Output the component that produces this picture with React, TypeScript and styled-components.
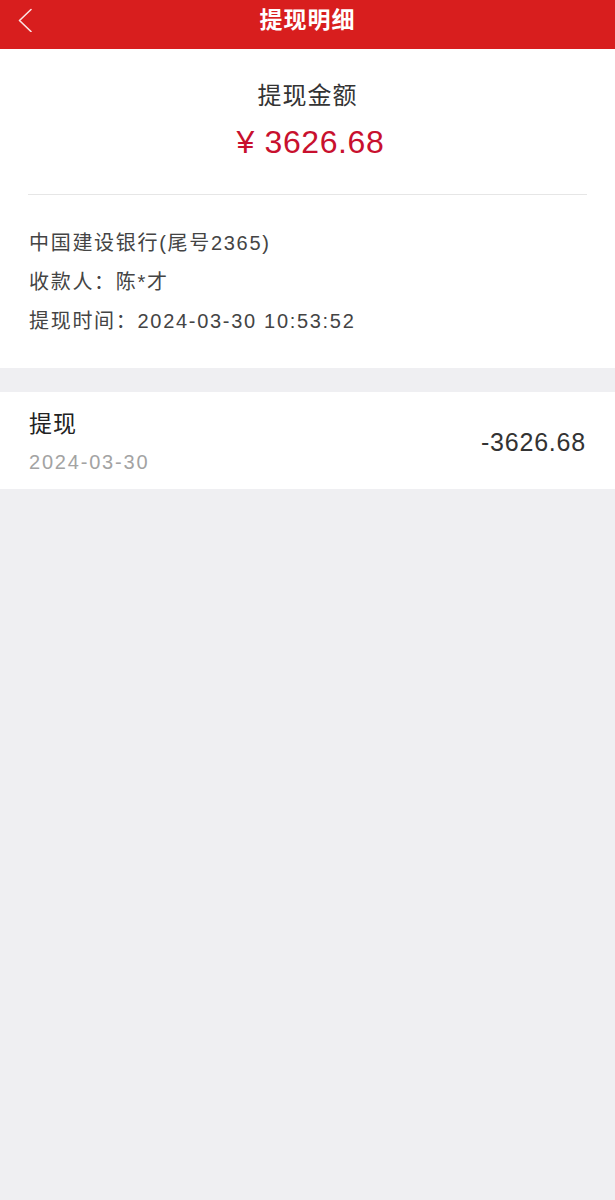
import React from 'react';
import styled, { createGlobalStyle } from 'styled-components';

const red = '#d81e1e';
const amountRed = '#c8102e';
const pageGray = '#efeff2';
const fontStack = `'Liberation Sans', 'Noto Sans CJK SC', sans-serif`;

const GlobalStyle = createGlobalStyle`
  html, body {
    margin: 0;
    padding: 0;
    background: ${pageGray};
    font-family: ${fontStack};
  }
`;

const Page = styled.div`
  width: 615px;
  min-height: 1200px;
  background: ${pageGray};
`;

const Header = styled.header`
  height: 49px;
  background: ${red};
  display: grid;
  grid-template-columns: 60px 1fr 60px;
  align-items: center;
`;

const BackButton = styled.button`
  width: 40px;
  height: 49px;
  padding: 0 0 0 17px;
  border: 0;
  background: transparent;
  display: flex;
  align-items: center;
  align-self: start;
  margin-top: -5px;
`;

const Title = styled.h1`
  margin: -9px 0 0;
  text-align: center;
  color: #fff;
  font-size: 23px;
  font-weight: 700;
  letter-spacing: 1px;
  line-height: 49px;
`;

const Card = styled.section`
  background: #fff;
`;

const Summary = styled.div`
  padding-top: 30px;
  display: flex;
  flex-direction: column;
  align-items: center;
  gap: 9px;
`;

const SummaryLabel = styled.div`
  font-size: 24px;
  line-height: 34px;
  color: #333;
  letter-spacing: 1px;
`;

const SummaryAmount = styled.div`
  font-size: 32px;
  line-height: 40px;
  color: ${amountRed};
  letter-spacing: 0.6px;
  margin-left: 6px;
`;

const Divider = styled.hr`
  margin: 32px 28px 0;
  border: 0;
  border-top: 1px solid #e6e6e6;
`;

const InfoList = styled.div`
  padding: 29px 29px 27px;
  display: flex;
  flex-direction: column;
`;

const InfoLine = styled.div`
  font-size: 20px;
  line-height: 39px;
  color: #444;
  letter-spacing: 1.7px;
`;

const Gap = styled.div`
  height: 24px;
`;

const Record = styled.div`
  background: #fff;
  padding: 16px 29px 13px;
  display: flex;
  align-items: center;
  justify-content: space-between;
`;

const RecordMain = styled.div`
  display: flex;
  flex-direction: column;
  gap: 8px;
`;

const RecordTitle = styled.div`
  font-size: 23px;
  line-height: 32px;
  color: #222;
  letter-spacing: 1px;
`;

const RecordDate = styled.div`
  font-size: 20px;
  line-height: 28px;
  color: #a3a3a3;
  letter-spacing: 1.8px;
`;

const RecordAmount = styled.div`
  font-size: 25px;
  line-height: 32px;
  color: #333;
  letter-spacing: 0.8px;
`;

const info = ['中国建设银行(尾号2365)', '收款人：陈*才', '提现时间：2024-03-30 10:53:52'];

const App: React.FC = (): JSX.Element => {
  return (
    <Page>
      <GlobalStyle />
      <Header>
        <BackButton aria-label="返回">
          <svg width="16" height="24" viewBox="0 0 16 24">
            <polyline
              points="14,1.5 2.5,12.5 14,23.5"
              fill="none"
              stroke="#fbe3e3"
              strokeWidth="1.6"
              strokeLinecap="round"
              strokeLinejoin="round"
            />
          </svg>
        </BackButton>
        <Title>提现明细</Title>
        <span />
      </Header>

      <Card>
        <Summary>
          <SummaryLabel>提现金额</SummaryLabel>
          <SummaryAmount>¥ 3626.68</SummaryAmount>
        </Summary>
        <Divider />
        <InfoList>
          {info.map((line) => (
            <InfoLine key={line}>{line}</InfoLine>
          ))}
        </InfoList>
      </Card>

      <Gap />

      <Record>
        <RecordMain>
          <RecordTitle>提现</RecordTitle>
          <RecordDate>2024-03-30</RecordDate>
        </RecordMain>
        <RecordAmount>-3626.68</RecordAmount>
      </Record>
    </Page>
  );
};

export default App;
